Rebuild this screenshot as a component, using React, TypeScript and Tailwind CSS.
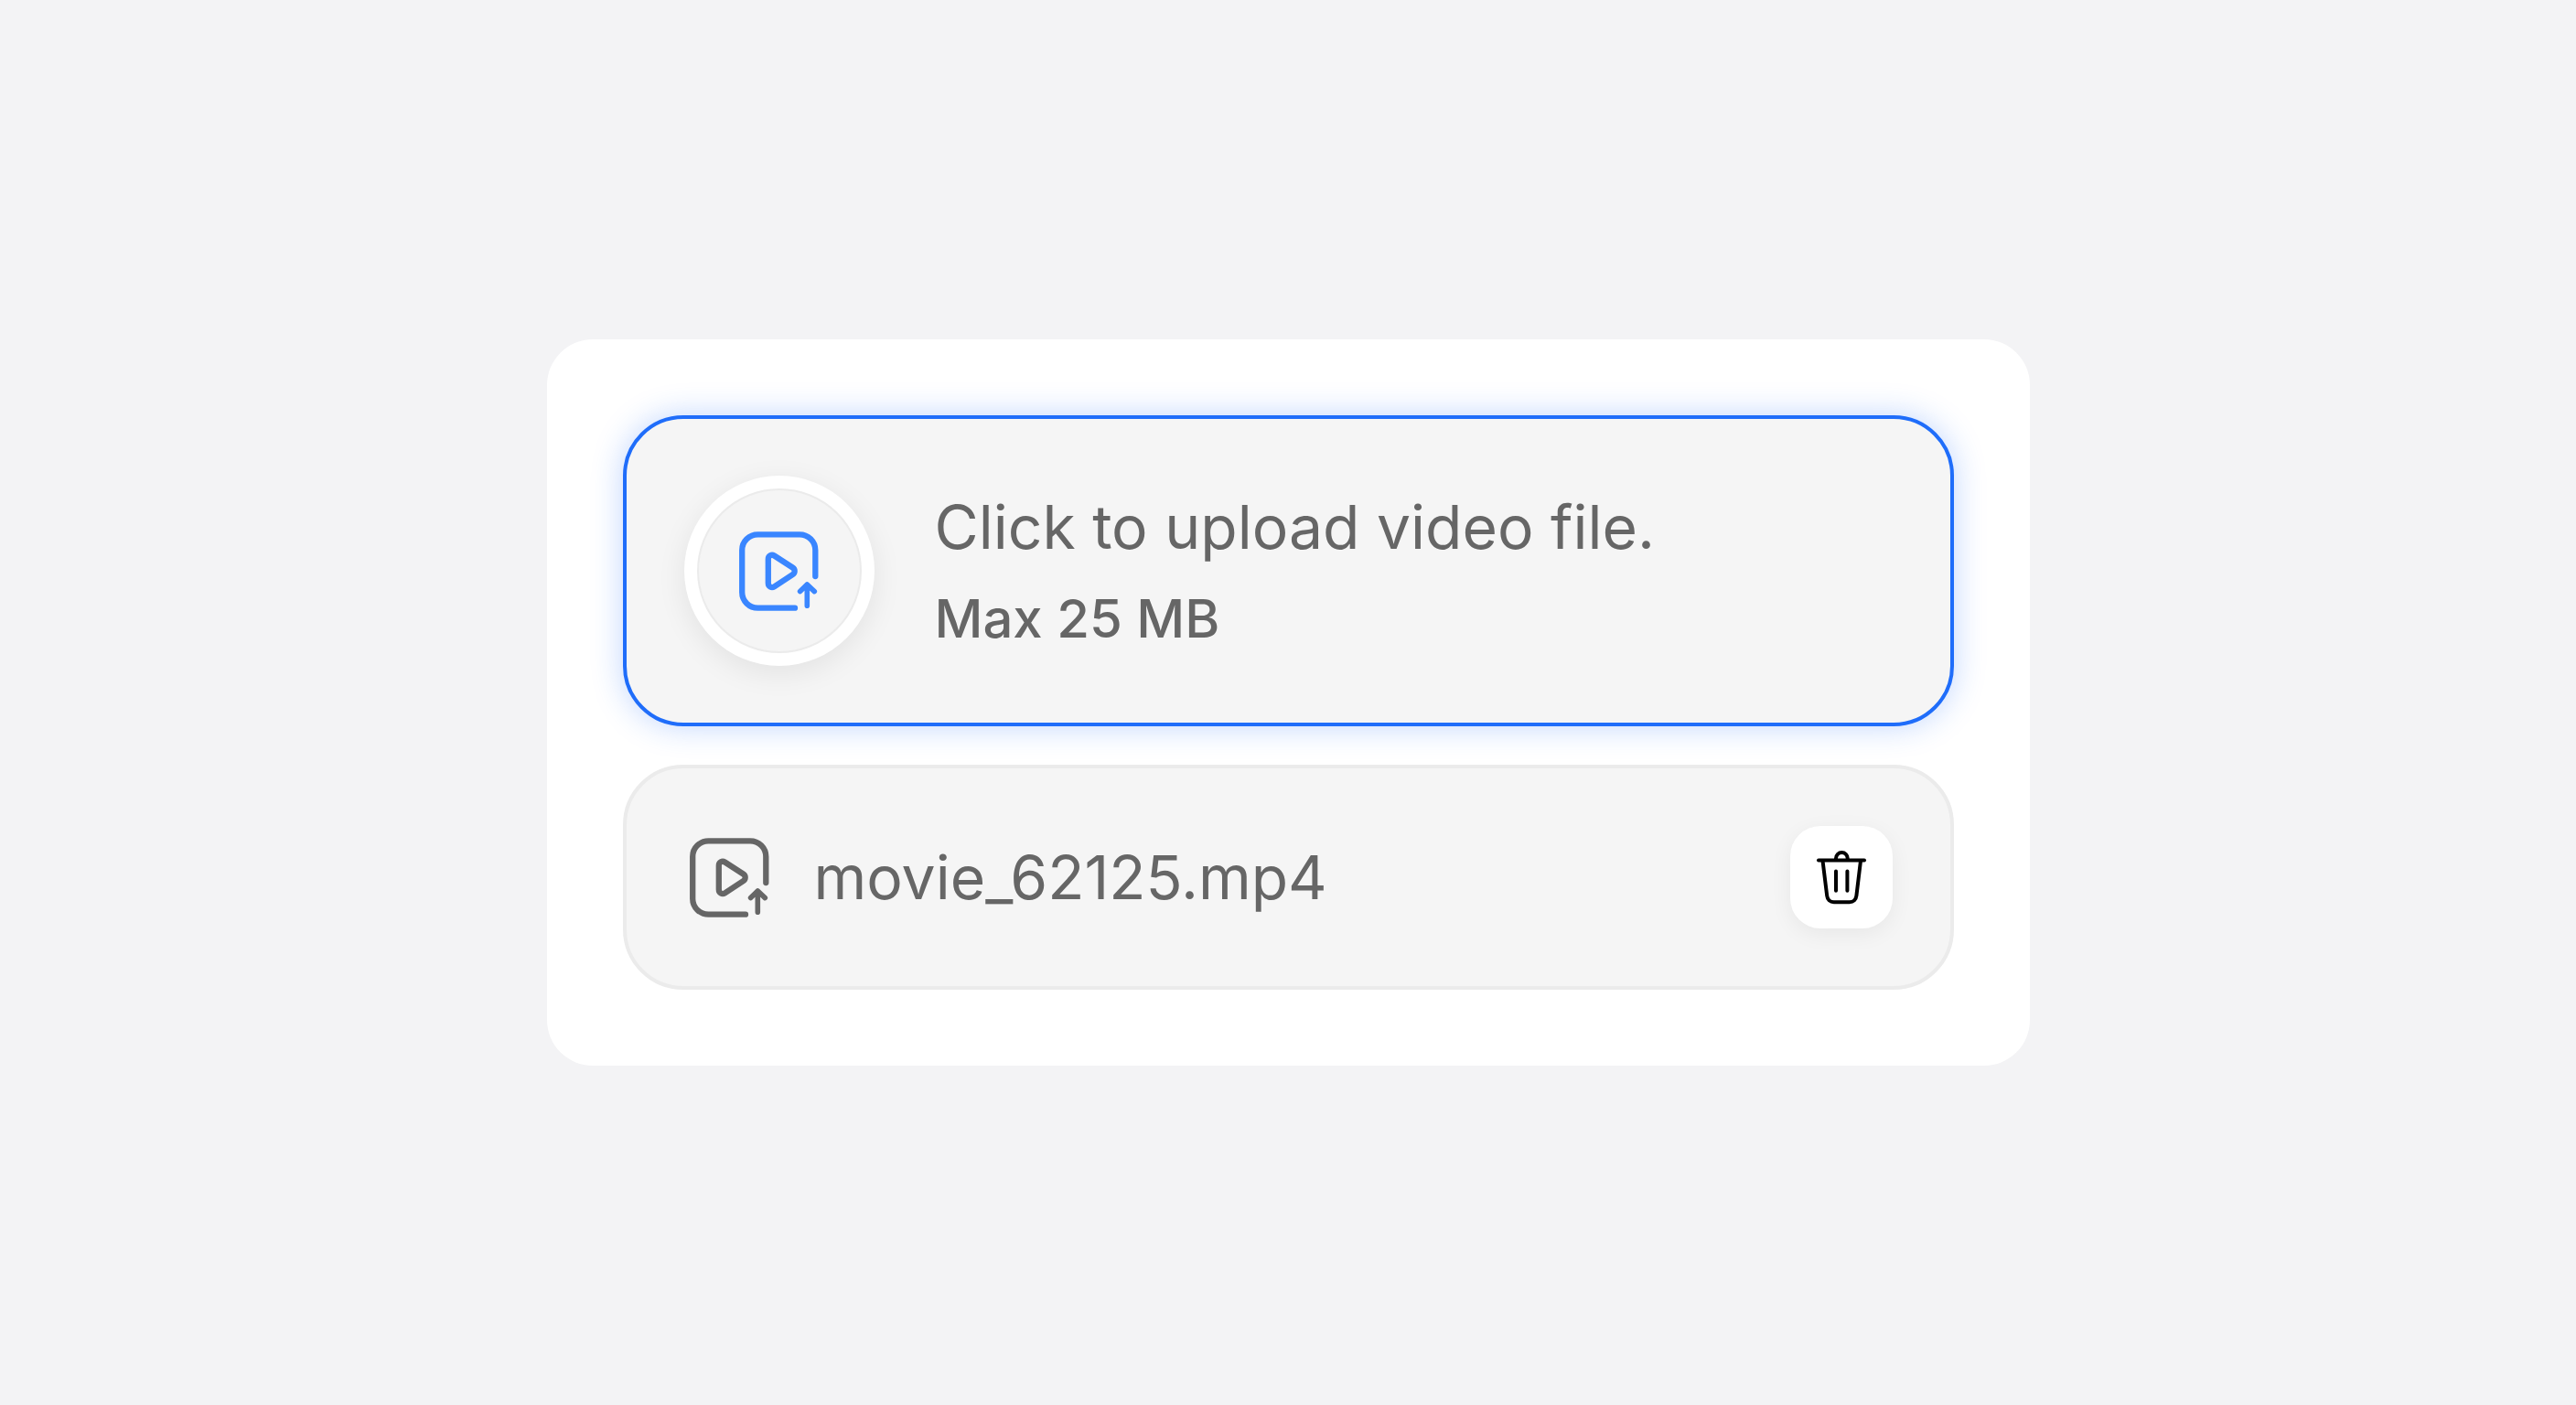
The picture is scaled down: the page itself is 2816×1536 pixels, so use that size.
import { useRef, useState } from "react";

function VideoIcon({ className }: { className?: string }) {
	return (
		<svg viewBox="0 0 100 100" fill="none" stroke="currentColor" strokeLinecap="round" strokeLinejoin="round" className={className} aria-hidden="true">
			<path d="M67 90.7H26.5C17 90.7 9.2 83 9.2 73.5V27.5C9.2 18 17 10.3 26.5 10.3H72C81.5 10.3 89.3 18 89.3 27.5V56" strokeWidth="6.3" />
			<path d="M37.8 37.2C37.8 33.6 41.4 31.7 44.4 33.5L64.5 46.5C67.4 48.4 67.4 52.2 64.5 54.1L44.4 67.3C41.4 69.2 37.8 67.2 37.8 63.6Z" strokeWidth="6.3" />
			<path d="M80.3 65V88.3M72.6 72.6L80.3 65L88.3 72.6" strokeWidth="5.6" />
		</svg>
	);
}

function TrashIcon({ className }: { className?: string }) {
	return (
		<svg viewBox="0 0 72 72" fill="none" stroke="currentColor" strokeWidth="4" strokeLinecap="round" strokeLinejoin="round" className={className} aria-hidden="true">
			<path d="M11 17.5H61" />
			<path d="M30 17V15.3A6.3 6.3 0 0 1 42.7 15.3V17" />
			<path d="M15.5 18L20.2 56.2C20.7 60.4 23.5 63.2 27.8 63.2H44.8C49.1 63.2 51.9 60.4 52.4 56.2L57 18" />
			<path d="M30 29.5V50.8M42.4 29.5V50.8" />
		</svg>
	);
}

export default function App() {
	const [fileName, setFileName] = useState("movie_62125.mp4");
	const input = useRef<HTMLInputElement>(null);

	function handleChange() {
		const file = input.current?.files?.[0];
		if (file) setFileName(file.name);
	}

	function handleDelete() {
		setFileName("");
		if (input.current) input.current.value = "";
	}

	return (
		<main className="flex min-h-screen items-center justify-center bg-[#f3f3f5] font-['Inter',sans-serif] text-[#666666]">
			<div className="flex w-full max-w-[1621px] flex-col gap-[42px] rounded-[50px] bg-white p-[83px]">
				<label className="relative flex cursor-pointer items-center gap-[66px] rounded-[66px] border-4 border-[#1f6dfa] bg-[#f5f5f5] px-[63px] py-[62px] shadow-[0_0_34px_rgba(31,109,250,0.28)]">
					<input ref={input} type="file" accept="video/*" className="sr-only" onChange={handleChange} />
					<span className="flex size-[208px] shrink-0 rounded-full bg-white p-[14px] shadow-[0_8px_32px_rgba(0,0,0,0.08)]">
						<span className="flex size-full items-center justify-center rounded-full border-2 border-[#ebebeb] bg-[#f5f5f5] text-[#3a86ff]">
							<VideoIcon className="size-[100px]" />
						</span>
					</span>
					<span className="flex flex-col pt-1">
						<span className="text-[66px] leading-[100px]">Click to upload video file.</span>
						<span className="text-[58px] leading-[100px] font-medium">Max 25 MB</span>
					</span>
				</label>

				{fileName && (
					<div className="flex items-center gap-[42px] rounded-[66px] border-4 border-[#ebebeb] bg-[#f5f5f5] p-[63px]">
						<VideoIcon className="size-[100px] shrink-0" />
						<span className="grow truncate text-[66px] leading-[100px]">{fileName}</span>
						<button
							type="button"
							aria-label="Delete"
							className="flex size-[112px] shrink-0 cursor-pointer items-center justify-center rounded-[33px] bg-white text-black shadow-[0_6px_24px_rgba(0,0,0,0.06)]"
							onClick={handleDelete}
						>
							<TrashIcon className="size-[72px]" />
						</button>
					</div>
				)}
			</div>
		</main>
	);
}
